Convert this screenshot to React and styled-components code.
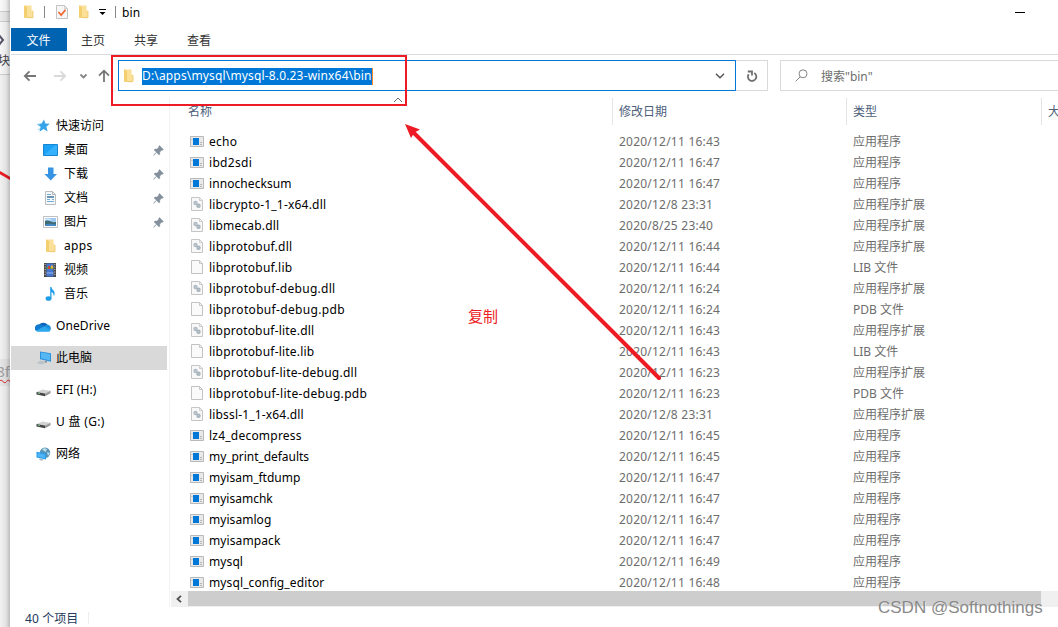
import styled, { createGlobalStyle } from "styled-components";

const GlobalStyle = createGlobalStyle`
  * {
    box-sizing: border-box;
  }

  body {
    margin: 0;
    overflow: hidden;
    background: #f1f1f1;
    font-family: "Noto Sans", "Noto Sans CJK SC", sans-serif;
    font-size: 12px;
    color: #000;
  }

  svg {
    display: block;
    flex: none;
  }
`;

const Screen = styled.div`
  position: relative;
  display: flex;
  width: 1058px;
  height: 627px;
  overflow: hidden;
`;

/* the strip of the page that shows behind the window */
const Backdrop = styled.div`
  position: relative;
  width: 10px;
  flex: none;
  overflow: hidden;
  background: #f1f1f1;

  &::after {
    content: "";
    position: absolute;
    inset: 0;
    background: linear-gradient(to right, rgba(0, 0, 0, 0), rgba(0, 0, 0, 0.06) 60%, rgba(0, 0, 0, 0.22));
  }
`;

const BackSlice = styled.div`
  display: flex;
  justify-content: flex-end;
  width: 10px;
  height: ${(props) => props.$height}px;
  overflow: hidden;
  background: ${(props) => props.$color};
  border-bottom: ${(props) => (props.$line ? "1px solid #cfcfcf" : "0")};
`;

const BackText = styled.span`
  flex: none;
  font-size: 12px;
  line-height: 18px;
  color: #3f3f4a;
`;

const BackCode = styled.span`
  flex: none;
  height: 24px;
  font-size: 15px;
  line-height: 24px;
  color: #a2a2a2;
  text-decoration: underline wavy #e02020 1px;
  text-underline-offset: 2px;
`;

const Window = styled.main`
  display: flex;
  flex-direction: column;
  flex: 1;
  min-width: 0;
  padding-left: 1px;
  background: #fff;
`;

const TitleBar = styled.header`
  display: flex;
  align-items: center;
  height: 28px;
  padding: 0 33px 4px 12px;
`;

const QuickIcon = styled.span`
  display: flex;
  margin-left: ${(props) => props.$gap || 0}px;
`;

const Divider = styled.span`
  width: 1px;
  height: 12px;
  margin-left: ${(props) => props.$gap}px;
  background: #8a8a8a;
`;

const Title = styled.span`
  margin-left: 6px;
  line-height: 16px;
  padding-top: 1px;
  letter-spacing: 0.1px;
`;

const Minimize = styled.span`
  width: 10px;
  height: 1px;
  margin: 1px 0 0 auto;
  background: #000;
`;

const Tabs = styled.nav`
  display: flex;
  height: 27px;
  border-bottom: 1px solid #dadbdc;
`;

const Tab = styled.span`
  display: flex;
  align-items: center;
  justify-content: center;
  width: ${(props) => (props.$active ? 56 : 53)}px;
  height: 23px;
  padding: 1px 1px 0 0;
  color: ${(props) => (props.$active ? "#fff" : "#333")};
  background: ${(props) => (props.$active ? "#0063b1" : "transparent")};
`;

const AddressRow = styled.div`
  display: flex;
  height: 42px;
  padding: 5px 0 6px;
`;

const NavButtons = styled.div`
  display: flex;
  align-items: center;
  width: 107px;
  padding-left: 12px;
`;

const AddressBox = styled.div`
  display: flex;
  align-items: center;
  width: 618px;
  height: 31px;
  padding: 0 10px 0 4px;
  border: 1px solid #0078d7;
`;

const Selection = styled.span`
  height: 17px;
  margin: 1px 0 0 8px;
  line-height: 16px;
  color: #fff;
  background: #0078d7;
  border-right: 1px solid #ff8728;
  letter-spacing: 0.16px;
`;

const Push = styled.span`
  margin-left: auto;
`;

const RefreshBox = styled.div`
  display: flex;
  align-items: center;
  justify-content: center;
  width: 32px;
  height: 31px;
  padding-left: 2px;
  border: 1px solid #d9d9d9;
  border-left: 0;
`;

const SearchBox = styled.div`
  display: flex;
  align-items: center;
  flex: 1;
  gap: 13px;
  height: 31px;
  margin-left: 12px;
  padding-left: 14px;
  border: 1px solid #d9d9d9;
  border-right: 0;
  color: #6d6d6d;
`;

const Body = styled.div`
  display: flex;
  height: 510px;
`;

const Sidebar = styled.aside`
  width: 159px;
  flex: none;
  height: 510px;
  padding-top: 17px;
  border-right: 1px solid #f3f3f3;
`;

const SideGroup = styled.div`
  margin-bottom: 8px;
`;

const SideItem = styled.div`
  display: flex;
  align-items: center;
  width: 156px;
  height: 24px;
  padding: 0 3px 0 ${(props) => (props.$nested ? 31 : 24)}px;
  background: ${(props) => (props.$selected ? "#d9d9d9" : "transparent")};
`;

const SideLabel = styled.span`
  flex: 1;
  margin-left: ${(props) => (props.$nested ? 6 : 5)}px;
  line-height: 18px;
  letter-spacing: ${(props) => props.$spacing || 0}px;
`;

const IconSlot = styled.span`
  display: flex;
  justify-content: center;
  width: 16px;
  flex: none;
`;

const Files = styled.section`
  display: flex;
  flex-direction: column;
  flex: 1;
  min-width: 0;
  margin-left: 1px;
`;

const columns = "442px 234px 195px 1fr";

const HeaderRow = styled.div`
  display: grid;
  grid-template-columns: ${columns};
  height: 34px;
  padding-top: 1px;
  color: #4c607a;
`;

const HeaderCell = styled.div`
  height: 27px;
  padding: ${(props) => (props.$first ? "5px 0 0 17px" : "5px 0 0 6px")};
  border-right: 1px solid #e5e5e5;
  line-height: 18px;
  white-space: nowrap;

  &:last-child {
    border-right: 0;
  }
`;

const Rows = styled.div`
  height: 460px;
  overflow: hidden;
`;

const FileRow = styled.div`
  display: grid;
  grid-template-columns: ${columns};
  height: 21px;
  color: #6d6d6d;
  line-height: 22px;
`;

const NameCell = styled.div`
  display: flex;
  align-items: center;
  gap: 5px;
  padding-left: 19px;
  color: #000;
  white-space: nowrap;

  svg {
    margin-bottom: 2px;
  }
`;

const FileName = styled.span`
  line-height: 20px;
  letter-spacing: ${(props) => props.$spacing || 0}px;
`;

const Cell = styled.div`
  padding-left: 6px;
  white-space: nowrap;
  letter-spacing: ${(props) => props.$spacing || 0}px;
`;

const Scrollbar = styled.div`
  display: flex;
  height: 16px;
  background: #f0f0f0;
`;

const ScrollButton = styled.div`
  display: flex;
  align-items: center;
  justify-content: center;
  width: 17px;
  padding-right: 1px;
`;

const Thumb = styled.div`
  width: 853px;
  height: 15px;
  background: #cdcdcd;
`;

const StatusBar = styled.footer`
  display: flex;
  align-items: center;
  height: 20px;
  padding: 2px 0 0 14px;
  color: #1e395b;
  letter-spacing: 0.1px;
`;

const StatusDivider = styled.span`
  width: 1px;
  height: 12px;
  margin-left: 10px;
  background: #eeeeee;
`;

const Marks = styled.svg`
  position: absolute;
  top: 0;
  left: 0;
  pointer-events: none;
`;

const Note = styled.span`
  position: absolute;
  top: 305px;
  left: 468px;
  font-size: 15px;
  line-height: 23px;
  color: #ed1c24;
`;

const Watermark = styled.span`
  position: absolute;
  top: 596px;
  left: 878px;
  font-family: "Liberation Sans", Arial, sans-serif;
  font-size: 17px;
  line-height: 24px;
  color: #8a8a8a;
  text-shadow: 1px 1px 0 rgba(255, 255, 255, 0.6);
  white-space: nowrap;
`;

const FolderIcon = () => (
  <svg width="11" height="14" viewBox="0 0 11 14">
    <path d="M1 .5h7.5v5H10v7.8H6L1 12.5z" fill="#fbe09a" />
    <path d="M1 .5 4 2v11L1 12.5z" fill="#f3cf70" />
    <path d="M4 12.5h6V6" fill="none" stroke="#ecc765" strokeWidth=".8" />
  </svg>
);

const PropertiesIcon = () => (
  <svg width="12" height="14" viewBox="0 0 12 14">
    <path d="M.5.5h8l3 3v10H.5z" fill="#f6f6f6" stroke="#c3c3c3" />
    <path d="M8.5.5v3h3" fill="none" stroke="#cecece" />
    <path d="m2.500 7 2.700 3L9.500 4.800" fill="none" stroke="#ef6a35" strokeWidth="1.800" />
  </svg>
);

const StarIcon = () => (
  <svg width="14" height="14" viewBox="0 0 14 14">
    <path d="m8 .5 1.400 4.100 4.300.2-3.300 2.900 1.200 4.800-4.100-2.400-4 2.600 1.100-4.900L.8 5l4.800-.4z" fill="#35a4ea" />
    <path d="M1 5.500 4 5 2.500 7zM1 11l3-2-.5 2z" fill="#9cd5f7" />
  </svg>
);

const DesktopIcon = () => (
  <svg width="15" height="12" viewBox="0 0 15 12">
    <path d="M.5.5h14v11H.5z" fill="#1ba2f6" stroke="#1686d2" />
    <path d="M1 11 13 1h1v10z" fill="#35b2fb" />
  </svg>
);

const DownloadIcon = () => (
  <svg width="15" height="14" viewBox="0 0 15 14">
    <path d="M5 .5h5.500V7H14l-6.300 6.500L1.500 7H5z" fill="#3794e3" />
  </svg>
);

const DocumentIcon = () => (
  <svg width="15" height="14" viewBox="0 0 15 14">
    <path d="M2.500.5h7l3 3v10h-10z" fill="#f7f7f7" stroke="#b9bec1" />
    <path d="M9.500.5v3h3" fill="none" stroke="#aeb4b8" />
    <path d="M4 3.500h4M4 8.500h3M4 10.500h7M9 8.500h2" stroke="#6fb1de" />
    <path d="M4 6h7" stroke="#4a7ba4" strokeWidth="1.600" />
  </svg>
);

const PictureIcon = () => (
  <svg width="15" height="12" viewBox="0 0 15 12">
    <path d="M.5.5h14v11H.5z" fill="#fff" stroke="#c0c0c0" />
    <path d="M2 2h11v8H2z" fill="#9fc9f0" />
    <path d="M2 5c4-2 6 2 11 1v4H2z" fill="#3f6d73" />
    <path d="M2 8.500c4-1 7-1 11 0V10H2z" fill="#4788c4" />
    <path d="M2 3.500c2-1 4 0 6 .5" stroke="#eef7ff" fill="none" />
  </svg>
);

const VideoIcon = () => (
  <svg width="15" height="14" viewBox="0 0 15 14">
    <path d="M1 0h12v14H1z" fill="#4a4a4a" />
    <path d="M3.500.5h7v13h-7z" fill="#4776cf" />
    <path d="M3.500 4h7v2h-7z" fill="#5d983d" />
    <path d="M5 3h2v3H5z" fill="#d3432f" />
    <path d="M8 2.500h2v3H8z" fill="#efae35" />
    <path d="M3.500 9.500h7v1h-7z" fill="#9dbbe8" />
    <path d="M2.200 1v12M11.800 1v12" stroke="#c9c9c9" strokeWidth="1" strokeDasharray="1 1.500" />
  </svg>
);

const MusicIcon = () => (
  <svg width="15" height="14" viewBox="0 0 15 14">
    <ellipse cx="5.500" cy="11.500" rx="2.900" ry="2.300" fill="#1f9de8" />
    <path d="M7.200 0h1.300c0 3 3.800 3 3.100 7.500-.1.700-.6 1-1 1.500C11 6.500 9.500 5.500 8.500 5v6.500H7.200z" fill="#1f9de8" />
  </svg>
);

const CloudIcon = () => (
  <svg width="16" height="11" viewBox="0 0 16 11">
    <path d="M4 4a5 4.300 0 0 1 8.500-.3L9 9H2z" fill="#0a63b8" />
    <path d="M3.500 3.300A3.900 3.900 0 0 0 1 10l7-2.500 2-2C8 4.500 6 3 3.500 3.300z" fill="#1079d0" />
    <path d="M12.300 3.600A3.600 3.600 0 0 1 14.500 10L8 8l1.500-2.500c.8-1.200 1.700-1.900 2.800-1.900z" fill="#1a90df" />
    <path d="M1 9.800 9.200 5.300 15.500 9c-.5 1.300-1.300 1.800-2.500 1.800H3.500c-1.300 0-2-.4-2.500-1z" fill="#2ba7ed" />
  </svg>
);

const ComputerIcon = () => (
  <svg width="15" height="14" viewBox="0 0 15 14">
    <path d="m4 .5 11 1.800v8.500L4 8.300z" fill="#2a91dc" />
    <path d="m5 1.500 9 1.500v6.500L5 7.300z" fill="#55b8f5" />
    <path d="m5 9.500 6 1.500-5 2.500L.5 12z" fill="#bac3c9" />
    <path d="m9 9.500 2 .5v1.500H9z" fill="#85929b" />
  </svg>
);

const DriveIcon = () => (
  <svg width="15" height="14" viewBox="0 0 15 14">
    <path d="m.5 9 6-2.500 8 1.300L9 10.500z" fill="#d3d3d3" />
    <path d="m.5 9 8.500 1.500v2.700L.5 11.600z" fill="#464646" />
    <path d="m9 10.500 5.500-2.700v2.400L9 13.200z" fill="#9a9a9a" />
    <path d="M2 10.500h2" stroke="#5eb46d" />
  </svg>
);

const NetworkIcon = () => (
  <svg width="15" height="14" viewBox="0 0 15 14">
    <circle cx="9" cy="5.700" r="5.200" fill="#5793b7" />
    <path d="M6 2.500c2-2 4-1 5 0L9.500 5zM11 5l3 1-2 3z" fill="#b9dce9" />
    <path d="m.5 4.800 9.500 1.700v6l-9.500-2z" fill="#259beb" />
    <path d="m1.500 6 7.500 1.400v3.800L1.500 9.700z" fill="#4fb5f7" />
    <path d="m4 11.500 4 1.200-2 1-3-1z" fill="#a9b5bc" />
  </svg>
);

const PinIcon = () => (
  <svg width="11" height="11" viewBox="0 0 11 11">
    <path d="m6.500.5 4 4-1 .8-.8-.1-1.900 1.900.1 2-.9.900-2.400-2.500L1 10 .5 10.500 1 9.500 3.500 7.200 1 4.900l.9-.9 2 .1 1.900-1.900-.1-.9z" fill="#84919c" stroke="#84919c" strokeWidth=".4" />
  </svg>
);

const ExeIcon = () => (
  <svg width="14" height="11" viewBox="0 0 14 11">
    <path d="M.5.5h13v10H.5z" fill="#e9e9e9" stroke="#b9b9b9" />
    <path d="M3 2h6v7H3z" fill="#0078d7" />
    <path d="M10 6.500h2M10 8.500h2M1.500 3.500h1" stroke="#b5b5b5" />
  </svg>
);

const DllIcon = () => (
  <svg width="14" height="14" viewBox="0 0 14 14">
    <path d="M1.500.5h8l3 3v10h-11z" fill="#f8f8f8" stroke="#c6c6c6" />
    <path d="M9.500.5v3h3" fill="none" stroke="#cecece" />
    <circle cx="5.500" cy="6" r="1.500" fill="#c3cdd4" stroke="#b0bbc3" strokeWidth="1.400" />
    <circle cx="8.500" cy="8.800" r="1.500" fill="#c3cdd4" stroke="#a5b1b9" strokeWidth="1.400" />
  </svg>
);

const BlankFileIcon = () => (
  <svg width="14" height="14" viewBox="0 0 14 14">
    <path d="M1.500.5h8l3 3v10h-11z" fill="#fafafa" stroke="#c2c2c2" />
    <path d="M9.500.5v3h3" fill="none" stroke="#c8c8c8" />
  </svg>
);

const fileKinds = {
  exe: { Icon: ExeIcon, type: "应用程序" },
  dll: { Icon: DllIcon, type: "应用程序扩展" },
  lib: { Icon: BlankFileIcon, type: "LIB 文件" },
  pdb: { Icon: BlankFileIcon, type: "PDB 文件" },
};

const files = [
  { name: "echo", kind: "exe", date: "2020/12/11 16:43", spacing: 0.25 },
  { name: "ibd2sdi", kind: "exe", date: "2020/12/11 16:47", spacing: 0.3 },
  { name: "innochecksum", kind: "exe", date: "2020/12/11 16:47", spacing: 0.08 },
  { name: "libcrypto-1_1-x64.dll", kind: "dll", date: "2020/12/8 23:31", spacing: 0.2 },
  { name: "libmecab.dll", kind: "dll", date: "2020/8/25 23:40", spacing: 0.17 },
  { name: "libprotobuf.dll", kind: "dll", date: "2020/12/11 16:44", spacing: 0.22 },
  { name: "libprotobuf.lib", kind: "lib", date: "2020/12/11 16:44", spacing: 0.22 },
  { name: "libprotobuf-debug.dll", kind: "dll", date: "2020/12/11 16:24", spacing: 0.29 },
  { name: "libprotobuf-debug.pdb", kind: "pdb", date: "2020/12/11 16:24", spacing: 0.33 },
  { name: "libprotobuf-lite.dll", kind: "dll", date: "2020/12/11 16:43", spacing: 0.2 },
  { name: "libprotobuf-lite.lib", kind: "lib", date: "2020/12/11 16:43", spacing: 0.2 },
  { name: "libprotobuf-lite-debug.dll", kind: "dll", date: "2020/12/11 16:23", spacing: 0.26 },
  { name: "libprotobuf-lite-debug.pdb", kind: "pdb", date: "2020/12/11 16:23", spacing: 0.31 },
  { name: "libssl-1_1-x64.dll", kind: "dll", date: "2020/12/8 23:31", spacing: 0.17 },
  { name: "lz4_decompress", kind: "exe", date: "2020/12/11 16:45", spacing: 0.22 },
  { name: "my_print_defaults", kind: "exe", date: "2020/12/11 16:45", spacing: -0.05 },
  { name: "myisam_ftdump", kind: "exe", date: "2020/12/11 16:47" },
  { name: "myisamchk", kind: "exe", date: "2020/12/11 16:47" },
  { name: "myisamlog", kind: "exe", date: "2020/12/11 16:47", spacing: 0.05 },
  { name: "myisampack", kind: "exe", date: "2020/12/11 16:47", spacing: 0.1 },
  { name: "mysql", kind: "exe", date: "2020/12/11 16:49", spacing: 0.1 },
  { name: "mysql_config_editor", kind: "exe", date: "2020/12/11 16:48", spacing: 0.12 },
];

const sideGroups = [
  [
    { label: "快速访问", Icon: StarIcon },
    { label: "桌面", Icon: DesktopIcon, nested: true, pinned: true },
    { label: "下载", Icon: DownloadIcon, nested: true, pinned: true },
    { label: "文档", Icon: DocumentIcon, nested: true, pinned: true },
    { label: "图片", Icon: PictureIcon, nested: true, pinned: true },
    { label: "apps", Icon: FolderIcon, nested: true, spacing: 0.3 },
    { label: "视频", Icon: VideoIcon, nested: true },
    { label: "音乐", Icon: MusicIcon, nested: true },
  ],
  [{ label: "OneDrive", Icon: CloudIcon, spacing: 0.1 }],
  [{ label: "此电脑", Icon: ComputerIcon, selected: true }],
  [{ label: "EFI (H:)", Icon: DriveIcon, spacing: 0.15 }],
  [{ label: "U 盘 (G:)", Icon: DriveIcon, spacing: 0.32 }],
  [{ label: "网络", Icon: NetworkIcon }],
];

const App = () => (
  <Screen>
    <GlobalStyle />
    <Backdrop>
      <BackSlice $height={12} $color="#fafafa" $line />
      <BackSlice $height={10} $color="#ececec" $line />
      <BackSlice $height={30} $color="#f7f7f7">
        <svg width="10" height="30" viewBox="0 0 10 30">
          <path d="m-2 12 5 6-5 6" fill="none" stroke="#55556a" strokeWidth="2" />
        </svg>
      </BackSlice>
      <BackSlice $height={23} $color="#f7f7f7" $line>
        <BackText>码块</BackText>
      </BackSlice>
      <BackSlice $height={284} $color="#f1f1f1">
        <svg width="10" height="284" viewBox="0 0 10 284">
          <path d="m-1 97 12 7" stroke="#ed1c24" strokeWidth="2.800" />
        </svg>
      </BackSlice>
      <BackSlice $height={27} $color="#e6e6e6">
        <BackCode>8f</BackCode>
      </BackSlice>
    </Backdrop>
    <Window>
      <TitleBar>
        <QuickIcon>
          <FolderIcon />
        </QuickIcon>
        <Divider $gap={10} />
        <QuickIcon $gap={11}>
          <PropertiesIcon />
        </QuickIcon>
        <QuickIcon $gap={10}>
          <FolderIcon />
        </QuickIcon>
        <QuickIcon $gap={10}>
          <svg width="7" height="6" viewBox="0 0 7 6">
            <path d="M0 .5h7" stroke="#000" />
            <path d="M.5 3h6l-3 3z" />
          </svg>
        </QuickIcon>
        <Divider $gap={9} />
        <Title>bin</Title>
        <Minimize />
      </TitleBar>

      <Tabs>
        <Tab $active>文件</Tab>
        <Tab>主页</Tab>
        <Tab>共享</Tab>
        <Tab>查看</Tab>
      </Tabs>

      <AddressRow>
        <NavButtons>
          <svg width="90" height="14" viewBox="0 0 90 14" fill="none" strokeWidth="1.800">
            <path d="M13 7H2M6.500 2.300 1.800 7l4.700 4.700" stroke="#767676" />
            <path d="M31 7h11M37.500 2.300 42.200 7l-4.700 4.700" stroke="#d9d9d9" />
            <path d="m57.500 5.500 3 3 3-3" stroke="#858585" />
            <path d="M81 13V2M76 6.700 81 1.700l5 5" stroke="#767676" />
          </svg>
        </NavButtons>
        <AddressBox>
          <FolderIcon />
          <Selection>D:\apps\mysql\mysql-8.0.23-winx64\bin</Selection>
          <Push>
            <svg width="10" height="6" viewBox="0 0 10 6">
              <path d="m1 .8 4 4 4-4" fill="none" stroke="#505050" strokeWidth="1.300" />
            </svg>
          </Push>
        </AddressBox>
        <RefreshBox>
          <svg width="11" height="12" viewBox="0 0 11 12" fill="none" stroke="#707070" strokeWidth="1.800">
            <path d="M1.700 4.200a4.200 4.200 0 1 0 5.500-1.200" />
            <path d="M.8 1.500h4.200v4" />
          </svg>
        </RefreshBox>
        <SearchBox>
          <svg width="13" height="13" viewBox="0 0 13 13" fill="none" stroke="#858585">
            <circle cx="8" cy="4.800" r="4" />
            <path d="M5.200 7.800.7 12.300" />
          </svg>
          搜索"bin"
        </SearchBox>
      </AddressRow>

      <Body>
        <Sidebar>
          {sideGroups.map((group) => (
            <SideGroup key={group[0].label}>
              {group.map(({ label, Icon, nested, pinned, selected, spacing }) => (
                <SideItem key={label} $nested={nested} $selected={selected}>
                  <IconSlot>
                    <Icon />
                  </IconSlot>
                  <SideLabel $nested={nested} $spacing={spacing}>
                    {label}
                  </SideLabel>
                  {pinned && <PinIcon />}
                </SideItem>
              ))}
            </SideGroup>
          ))}
        </Sidebar>

        <Files>
          <HeaderRow>
            <HeaderCell $first>名称</HeaderCell>
            <HeaderCell>修改日期</HeaderCell>
            <HeaderCell>类型</HeaderCell>
            <HeaderCell>大</HeaderCell>
          </HeaderRow>
          <Rows>
            {files.map(({ name, kind, date, spacing }) => {
              const { Icon, type } = fileKinds[kind];
              return (
                <FileRow key={name}>
                  <NameCell>
                    <Icon />
                    <FileName $spacing={spacing}>{name}</FileName>
                  </NameCell>
                  <Cell $spacing={0.22}>{date}</Cell>
                  <Cell>{type}</Cell>
                </FileRow>
              );
            })}
          </Rows>
          <Scrollbar>
            <ScrollButton>
              <svg width="6" height="8" viewBox="0 0 6 8">
                <path d="M5 .8 1.500 4 5 7.200" fill="none" stroke="#505050" strokeWidth="1.800" />
              </svg>
            </ScrollButton>
            <Thumb />
          </Scrollbar>
        </Files>
      </Body>

      <StatusBar>
        40 个项目
        <StatusDivider />
      </StatusBar>
    </Window>

    <Marks width="1058" height="627" viewBox="0 0 1058 627">
      <path d="m394 102 4-4 4 4" fill="none" stroke="#6b6b6b" />
      <path d="M112 56h294v49H112z" fill="none" stroke="#ed1c24" strokeWidth="2" />
      <path d="m413 132 246 246" stroke="#ed1c24" strokeWidth="4" strokeLinecap="round" />
      <path d="m405 124 15 5.500-5.500 3-3.500 5.500z" fill="#ed1c24" />
    </Marks>
    <Note>复制</Note>
    <Watermark>CSDN @Softnothings</Watermark>
  </Screen>
);

export default App;
